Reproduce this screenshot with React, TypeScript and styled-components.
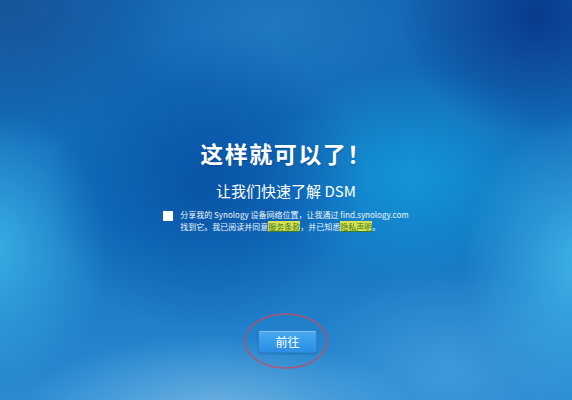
import React from "react";
import styled, { createGlobalStyle } from "styled-components";

const GlobalStyle = createGlobalStyle`
  html, body {
    margin: 0;
    padding: 0;
    background: #1470bd;
  }
  body {
    font-family: "Noto Sans CJK SC", "Noto Sans", "Liberation Sans", sans-serif;
  }
`;

const Screen = styled.div`
  position: relative;
  width: 572px;
  height: 400px;
  overflow: hidden;
  display: flex;
  flex-direction: column;
  align-items: center;
  padding-top: 140px;
  box-sizing: border-box;
  color: #ffffff;
  background:
    radial-gradient(ellipse 140px 120px at 94% 4%, rgba(8, 56, 138, 0.95), rgba(8, 56, 138, 0) 100%),
    radial-gradient(ellipse 170px 140px at 2% 2%, rgba(22, 84, 150, 0.9), rgba(22, 84, 150, 0) 100%),
    radial-gradient(ellipse 160px 150px at 36% 46%, rgba(8, 80, 164, 0.9), rgba(8, 80, 164, 0) 100%),
    radial-gradient(ellipse 120px 140px at -2% 62%, rgba(60, 178, 228, 0.95), rgba(60, 178, 228, 0) 100%),
    radial-gradient(ellipse 120px 150px at 102% 66%, rgba(66, 182, 232, 0.95), rgba(66, 182, 232, 0) 100%),
    radial-gradient(ellipse 200px 80px at 38% 104%, rgba(120, 184, 228, 0.9), rgba(120, 184, 228, 0) 100%),
    radial-gradient(ellipse 150px 110px at 72% 44%, rgba(20, 156, 220, 0.85), rgba(20, 156, 220, 0) 100%),
    radial-gradient(ellipse 160px 90px at 48% 6%, rgba(36, 124, 196, 0.8), rgba(36, 124, 196, 0) 100%),
    radial-gradient(ellipse 140px 100px at 78% 92%, rgba(70, 160, 220, 0.7), rgba(70, 160, 220, 0) 100%),
    linear-gradient(180deg, #1466b4 0%, #1272c0 55%, #2a8bd2 100%);
`;

const Title = styled.h1`
  margin: 0;
  font-size: 23px;
  line-height: 27px;
  font-weight: 700;
  letter-spacing: 1.5px;
  text-shadow: 0 1px 2px rgba(0, 40, 90, 0.35);
`;

const Subtitle = styled.h2`
  margin: 14px 0 0;
  font-size: 15px;
  line-height: 20px;
  font-weight: 400;
`;

const ConsentRow = styled.label`
  margin-top: 8px;
  display: flex;
  align-items: flex-start;
  gap: 7px;
`;

const Box = styled.span`
  margin-top: 2px;
  width: 10px;
  height: 10px;
  background: #ffffff;
  flex: none;
`;

const ConsentText = styled.p`
  margin: 0;
  font-size: 8px;
  line-height: 12px;
  color: #eef6fc;
  white-space: nowrap;
`;

const TermLink = styled.a`
  color: #3c7a2e;
  background: #d6e24e;
  text-decoration: underline;
`;

const Actions = styled.div`
  margin-top: 97px;
  padding-left: 3px;
`;

const ButtonWrap = styled.div`
  position: relative;
`;

const GoButton = styled.button`
  display: block;
  width: 59px;
  height: 23px;
  padding: 0;
  border: 1px solid #2c82d2;
  border-radius: 2px;
  background: linear-gradient(180deg, #4aabf0 0%, #389cec 50%, #2c8de2 100%);
  box-shadow: inset 0 1px 0 rgba(255, 255, 255, 0.3), 0 1px 2px rgba(10, 60, 120, 0.3);
  color: #ffffff;
  font-family: "Noto Sans CJK SC", sans-serif;
  font-size: 12px;
  line-height: 21px;
`;

const Ring = styled.svg`
  position: absolute;
  left: -15px;
  top: -18px;
  width: 86px;
  height: 58px;
  pointer-events: none;
`;

export default function App() {
  return (
    <>
      <GlobalStyle />
      <Screen>
        <Title>这样就可以了！</Title>
        <Subtitle>让我们快速了解 DSM</Subtitle>
        <ConsentRow>
          <Box />
          <ConsentText>
            分享我的 Synology 设备网络位置，让我通过 find.synology.com
            <br />
            找到它。我已阅读并同意<TermLink>服务条款</TermLink>，并已知悉
            <TermLink>隐私声明</TermLink>。
          </ConsentText>
        </ConsentRow>
        <Actions>
          <ButtonWrap>
            <GoButton>前往</GoButton>
            <Ring viewBox="0 0 86 58">
              <ellipse
                cx="43"
                cy="29"
                rx="41"
                ry="27"
                fill="none"
                stroke="#b9506c"
                strokeWidth="1.6"
                opacity="0.9"
              />
            </Ring>
          </ButtonWrap>
        </Actions>
      </Screen>
    </>
  );
}
